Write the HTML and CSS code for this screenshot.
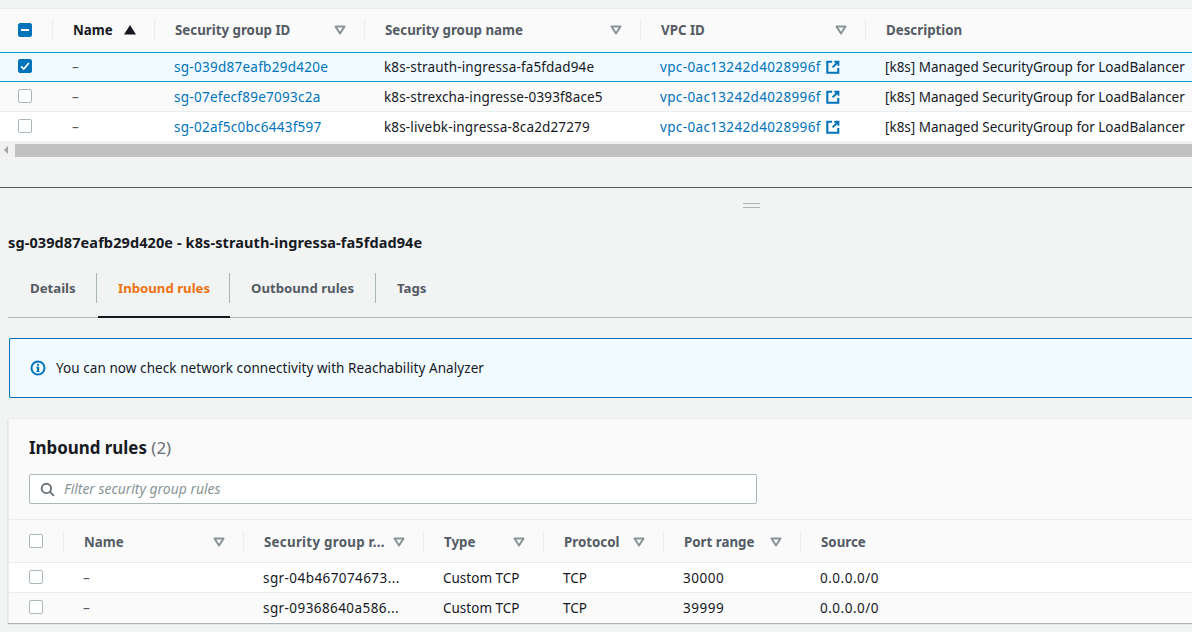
FILE: index.html
```html
<!DOCTYPE html>
<html lang="en">
<head>
<meta charset="utf-8">
<title>Security groups</title>
<link rel="stylesheet" href="styles.css">
</head>
<body>
<svg class="defs" width="0" height="0" aria-hidden="true">
  <symbol id="caret" viewBox="0 0 12 10"><path d="M1.500 1.500h9L6 8.500z" fill="none" stroke="#879596" stroke-width="2" stroke-linejoin="round"/></symbol>
  <symbol id="ext" viewBox="0 0 16 16"><path d="M7 2H1.500v12.500H14V9" fill="none" stroke="#0073bb" stroke-width="2.400"/><path d="M9.500 2h4.700v4.700M14 2L7.500 8.500" fill="none" stroke="#0073bb" stroke-width="2.200"/></symbol>
</svg>

<section class="top">
  <div class="grid grid-top head">
    <div class="hc first"><span class="cb cb-mixed"><i></i></span></div>
    <div class="hc active">Name<svg class="sort" viewBox="0 0 12 10"><path d="M6 0l6 9.500H0z" fill="#16191f"/></svg></div>
    <div class="hc">Security group ID<svg class="caret"><use href="#caret"/></svg></div>
    <div class="hc">Security group name<svg class="caret"><use href="#caret"/></svg></div>
    <div class="hc">VPC ID<svg class="caret"><use href="#caret"/></svg></div>
    <div class="hc nodiv">Description</div>
  </div>
  <div class="grid grid-top row selected">
    <div class="c first"><span class="cb cb-on"><svg viewBox="0 0 14 14"><path d="M2.500 7.500l3 3 6-7" fill="none" stroke="#fff" stroke-width="2"/></svg></span></div>
    <div class="c dash">–</div>
    <div class="c id"><a>sg-039d87eafb29d420e</a></div>
    <div class="c sg">k8s-strauth-ingressa-fa5fdad94e</div>
    <div class="c vpc"><a>vpc-0ac13242d4028996f</a><svg class="ext"><use href="#ext"/></svg></div>
    <div class="c">[k8s] Managed SecurityGroup for LoadBalancer</div>
  </div>
  <div class="grid grid-top row alt">
    <div class="c first"><span class="cb"></span></div>
    <div class="c dash">–</div>
    <div class="c id"><a>sg-07efecf89e7093c2a</a></div>
    <div class="c sg">k8s-strexcha-ingresse-0393f8ace5</div>
    <div class="c vpc"><a>vpc-0ac13242d4028996f</a><svg class="ext"><use href="#ext"/></svg></div>
    <div class="c">[k8s] Managed SecurityGroup for LoadBalancer</div>
  </div>
  <div class="grid grid-top row">
    <div class="c first"><span class="cb"></span></div>
    <div class="c dash">–</div>
    <div class="c id"><a>sg-02af5c0bc6443f597</a></div>
    <div class="c sg">k8s-livebk-ingressa-8ca2d27279</div>
    <div class="c vpc"><a>vpc-0ac13242d4028996f</a><svg class="ext"><use href="#ext"/></svg></div>
    <div class="c">[k8s] Managed SecurityGroup for LoadBalancer</div>
  </div>
  <div class="hscroll"><span class="arrow"></span><span class="thumb"></span></div>
</section>

<div class="splitter"><span class="grip"></span></div>

<h2 class="title">sg-039d87eafb29d420e - k8s-strauth-ingressa-fa5fdad94e</h2>

<nav class="tabs">
  <div class="tab">Details</div>
  <div class="tab on">Inbound rules</div>
  <div class="tab">Outbound rules</div>
  <div class="tab last">Tags</div>
</nav>

<div class="alert">
  <svg class="info" viewBox="0 0 16 16"><circle cx="8" cy="8" r="6.500" fill="none" stroke="#0073bb" stroke-width="2"/><path d="M8 7v4.500" stroke="#0073bb" stroke-width="2.200"/><path d="M6.500 11.500h3M6.500 7.200h2" stroke="#0073bb" stroke-width="1.200"/><circle cx="8" cy="4.800" r="1.100" fill="#0073bb"/></svg>
  <span>You can now check network connectivity with Reachability Analyzer</span>
</div>

<section class="panel">
  <div class="panel-head">
    <h3 class="panel-title">Inbound rules <span class="count">(2)</span></h3>
    <div class="filter">
      <svg class="search" viewBox="0 0 16 16"><circle cx="6.800" cy="6.800" r="5" fill="none" stroke="#687078" stroke-width="2"/><path d="M10.500 10.500l4.300 4.300" stroke="#687078" stroke-width="2"/></svg>
      <span>Filter security group rules</span>
    </div>
  </div>
  <div class="grid grid-low head low-head">
    <div class="hc first"><span class="cb"></span></div>
    <div class="hc">Name<svg class="caret"><use href="#caret"/></svg></div>
    <div class="hc trunc">Security group r...<svg class="caret"><use href="#caret"/></svg></div>
    <div class="hc">Type<svg class="caret"><use href="#caret"/></svg></div>
    <div class="hc">Protocol<svg class="caret"><use href="#caret"/></svg></div>
    <div class="hc">Port range<svg class="caret"><use href="#caret"/></svg></div>
    <div class="hc nodiv">Source</div>
  </div>
  <div class="grid grid-low row low-row">
    <div class="c first"><span class="cb"></span></div>
    <div class="c dash">–</div>
    <div class="c wide">sgr-04b467074673...</div>
    <div class="c">Custom TCP</div>
    <div class="c">TCP</div>
    <div class="c num">30000</div>
    <div class="c num">0.0.0.0/0</div>
  </div>
  <div class="grid grid-low row low-row alt">
    <div class="c first"><span class="cb"></span></div>
    <div class="c dash">–</div>
    <div class="c wide">sgr-09368640a586...</div>
    <div class="c">Custom TCP</div>
    <div class="c">TCP</div>
    <div class="c num">39999</div>
    <div class="c num">0.0.0.0/0</div>
  </div>
</section>
</body>
</html>
```
FILE: styles.css
```css
* { box-sizing: border-box; }
html, body { margin: 0; height: 632px; overflow: hidden; }
body {
  background: #f2f3f3;
  color: #16191f;
  font: 13.5px/18px "Noto Sans", "Open Sans", sans-serif;
  width: 1192px;
}
.defs { display: block; height: 0; }
.top { padding-top: 8px; border-bottom: 1px solid #545b64; height: 188px; }
.grid { display: grid; white-space: nowrap; }
.grid-top { grid-template-columns: 53px 102px 210px 276px 225px 326px; }
.grid-low { grid-template-columns: 55px 180px 180px 120px 120px 137px 392px; }
.head { background: #fafafa; border-top: 1px solid #eaeded; height: 44px; align-items: center; padding-bottom: 2px; }
.hc {
  height: 21px;
  padding: 0 18px 0 20px;
  border-right: 1px solid #eaeded;
  display: flex;
  align-items: center;
  justify-content: space-between;
  font-size: 13.300px;
  font-weight: 700;
  color: #545b64;
}
.hc.first { padding: 0 0 0 18px; justify-content: flex-start; }
.low-head .hc.first { padding-left: 20px; }
.low-head .hc.first .cb { margin-top: -1px; }
.hc.nodiv { border-right: 0; }
.hc.active { color: #16191f; padding-right: 12px; }
.hc.trunc { letter-spacing: .28px; }
.sort { width: 12px; height: 10px; margin-right: 6px; }
.caret { width: 12px; height: 10px; flex: none; }
.row { background: #fff; border-top: 1px solid #eaeded; height: 30px; align-items: center; }
.row.alt { background: #fafafa; }
.row.selected { background: #f1faff; border-top: 1px solid #00a1c9; border-bottom: 1px solid #00a1c9; height: 30px; }
.row.selected + .row { border-top: 0; height: 29px; }
.c { padding-left: 19px; overflow: hidden; display: flex; align-items: center; }
.c.first { padding-left: 18px; overflow: visible; }
.low-row .c.first { padding-left: 20px; }
.c.first .cb { margin-top: -2px; }
.dash { color: #545b64; }
.id { letter-spacing: .27px; }
.vpc { letter-spacing: .35px; }
.wide { letter-spacing: .42px; }
.sg { letter-spacing: .15px; }
.num { letter-spacing: .5px; }
a { color: #0073bb; }
.ext { width: 14px; height: 14px; margin-left: 5px; flex: none; }
.cb {
  display: block;
  width: 14px;
  height: 14px;
  border: 1px solid #aab7b8;
  border-radius: 2px;
  background: #fff;
}
.cb-on, .cb-mixed { background: #0073bb; border-color: #0073bb; }
.cb-on svg { display: block; width: 12px; height: 12px; }
.cb-mixed { display: flex; align-items: center; justify-content: center; }
.cb-mixed i { width: 8px; height: 2px; background: #fff; }
.hscroll { height: 16px; background: #f1f1f1; padding: 3px 0 0 15px; position: relative; }
.arrow {
  position: absolute;
  left: 4px;
  top: 5px;
  border: 4px solid transparent;
  border-left: 0;
  border-right: 4px solid #a3a3a3;
}
.thumb { display: block; height: 13px; background: #c1c1c1; }
.splitter { height: 38px; display: flex; justify-content: center; padding-top: 15px; padding-left: 310px; }
.grip { width: 17px; height: 5px; border-top: 1px solid #aab7b8; border-bottom: 1px solid #aab7b8; }
.title { margin: 7px 0 0 8px; font-size: 14.500px; letter-spacing: .1px; line-height: 18px; font-weight: 700; }
.tabs {
  margin: 22px 0 0 8px;
  height: 45px;
  display: grid;
  grid-template-columns: 89px 133px 146px auto;
  border-bottom: 1px solid #aab7b8;
}
.tab {
  height: 45px;
  padding: 0 0 0 21px;
  font-size: 13.200px;
  font-weight: 700;
  color: #545b64;
  position: relative;
  margin-bottom: -1px;
  line-height: 30px;
}
.tab:first-child { padding-left: 22px; }
.tab::after {
  content: "";
  position: absolute;
  right: 0;
  top: 0;
  height: 30px;
  border-right: 1px solid #aab7b8;
}
.tab.last::after { display: none; }
.tab.on { color: #ec7211; padding-left: 20px; margin: 0 0 -1px 1px; border-bottom: 2px solid #16191f; }
.alert {
  margin: 20px 0 0 9px;
  height: 60px;
  background: #f1faff;
  border: 1px solid #0073bb;
  border-right: 0;
  border-radius: 2px 0 0 2px;
  display: flex;
  align-items: center;
  gap: 10px;
  padding-left: 20px;
  letter-spacing: .07px;
}
.info { width: 16px; height: 16px; flex: none; }
.panel {
  margin: 20px 0 0 8px;
  background: #fff;
  border-top: 1px solid #eaeded;
  border-left: 1px solid #eaeded;
  box-shadow: 0 1px 1px 0 rgba(0, 28, 36, .3);
  height: 205px;
}
.panel-head { background: #fafafa; height: 100px; padding: 18px 0 0 20px; }
.panel-title { margin: 0; font-size: 16.900px; line-height: 22px; font-weight: 700; }
.count { font-weight: 400; color: #687078; }
.filter {
  margin-top: 15px;
  width: 728px;
  height: 30px;
  background: #fff;
  border: 1px solid #aab7b8;
  border-radius: 2px;
  display: flex;
  align-items: center;
  gap: 9px;
  padding-left: 10px;
  font-size: 13.900px;
  font-style: italic;
  color: #879596;
}
.search { width: 15px; height: 15px; flex: none; }
.low-head { height: 43px; padding: 1px 0 0; }
.low-row { height: 30px; }
```
